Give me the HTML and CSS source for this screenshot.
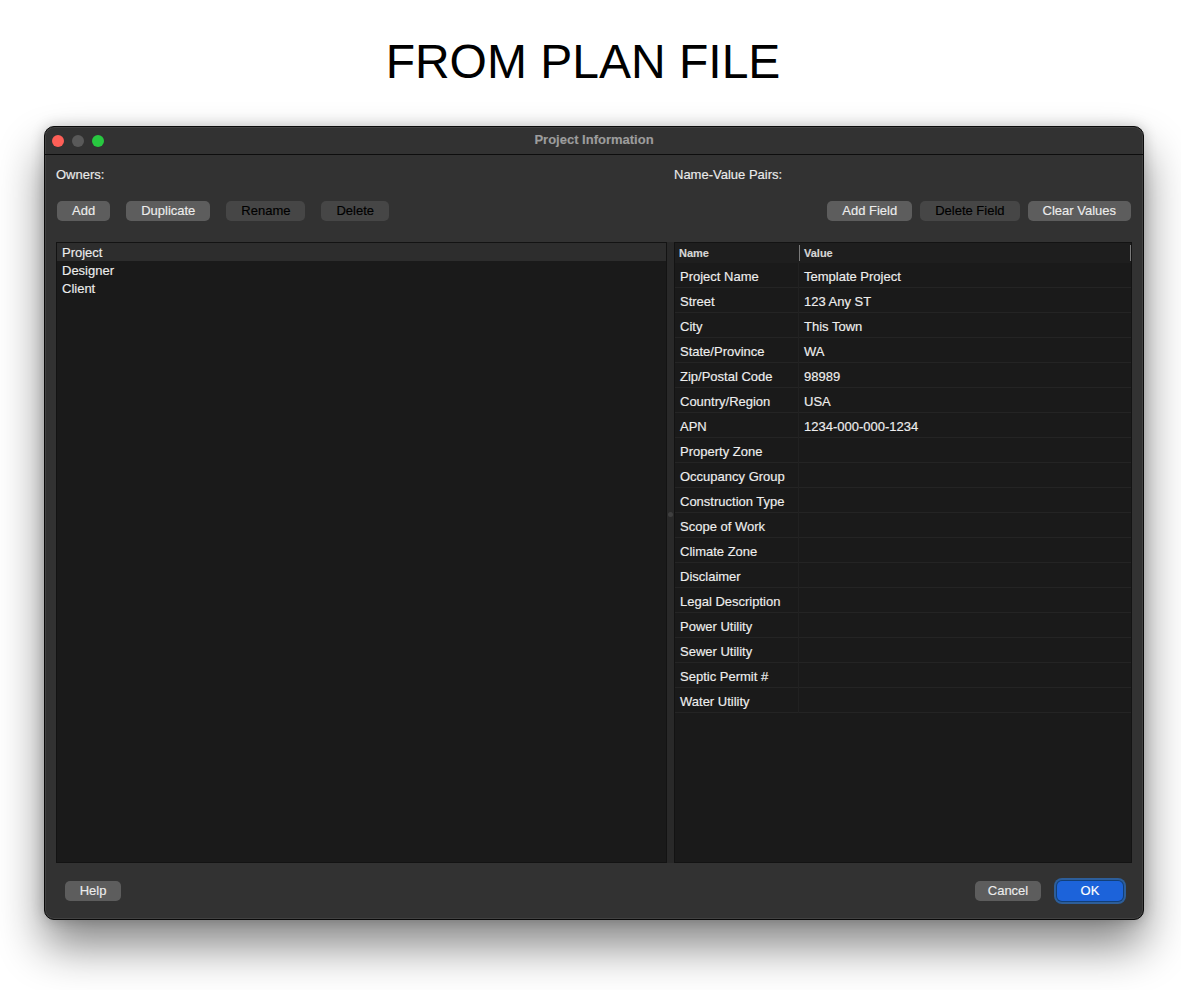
FILE: index.html
```html
<!DOCTYPE html>
<html lang="en">
<head>
<meta charset="utf-8">
<title>Project Information</title>
<link rel="stylesheet" href="styles.css">
</head>
<body>
<h1 class="page-title">FROM PLAN FILE</h1>

<div class="window">
  <div class="titlebar">
    <div class="lights">
      <span class="light close"></span>
      <span class="light min"></span>
      <span class="light zoom"></span>
    </div>
    <div class="title">Project Information</div>
    <div></div>
  </div>

  <div class="content">
    <div class="label owners-label">Owners:</div>
    <div class="label pairs-label">Name-Value Pairs:</div>

    <div class="toolbar left-tools">
      <button class="btn">Add</button>
      <button class="btn">Duplicate</button>
      <button class="btn disabled">Rename</button>
      <button class="btn disabled">Delete</button>
    </div>
    <div class="toolbar right-tools">
      <button class="btn">Add Field</button>
      <button class="btn disabled">Delete Field</button>
      <button class="btn">Clear Values</button>
    </div>

    <div class="list">
      <div class="list-row selected">Project</div>
      <div class="list-row">Designer</div>
      <div class="list-row">Client</div>
    </div>

    <div class="splitter"><span class="grip"></span></div>

    <div class="table">
      <div class="thead">
        <div class="th">Name</div>
        <div class="th value-th">Value</div>
      </div>
      <div class="tr"><div class="td name">Project Name</div><div class="td">Template Project</div></div>
      <div class="tr"><div class="td name">Street</div><div class="td">123 Any ST</div></div>
      <div class="tr"><div class="td name">City</div><div class="td">This Town</div></div>
      <div class="tr"><div class="td name">State/Province</div><div class="td">WA</div></div>
      <div class="tr"><div class="td name">Zip/Postal Code</div><div class="td">98989</div></div>
      <div class="tr"><div class="td name">Country/Region</div><div class="td">USA</div></div>
      <div class="tr"><div class="td name">APN</div><div class="td">1234-000-000-1234</div></div>
      <div class="tr"><div class="td name">Property Zone</div><div class="td"></div></div>
      <div class="tr"><div class="td name">Occupancy Group</div><div class="td"></div></div>
      <div class="tr"><div class="td name">Construction Type</div><div class="td"></div></div>
      <div class="tr"><div class="td name">Scope of Work</div><div class="td"></div></div>
      <div class="tr"><div class="td name">Climate Zone</div><div class="td"></div></div>
      <div class="tr"><div class="td name">Disclaimer</div><div class="td"></div></div>
      <div class="tr"><div class="td name">Legal Description</div><div class="td"></div></div>
      <div class="tr"><div class="td name">Power Utility</div><div class="td"></div></div>
      <div class="tr"><div class="td name">Sewer Utility</div><div class="td"></div></div>
      <div class="tr"><div class="td name">Septic Permit #</div><div class="td"></div></div>
      <div class="tr"><div class="td name">Water Utility</div><div class="td"></div></div>
    </div>
  </div>

  <div class="footer">
    <button class="btn help">Help</button>
    <div class="footer-right">
      <button class="btn wide">Cancel</button>
      <button class="btn wide primary">OK</button>
    </div>
  </div>
</div>
</body>
</html>
```

FILE: styles.css
```css
html, body {
  margin: 0;
  padding: 0;
  background: #ffffff;
  font-family: "Liberation Sans", Arial, sans-serif;
}

body {
  padding-bottom: 70px;
}

.page-title {
  margin: 38px 0 0;
  padding-right: 15px;
  height: 48px;
  line-height: 48px;
  font-size: 48px;
  font-weight: normal;
  text-align: center;
  color: #000;
}

/* dialog window */
.window {
  margin: 40px 0 0 44px;
  width: 1100px;
  height: 794px;
  box-sizing: border-box;
  border: 1px solid #0a0a0a;
  border-radius: 10px;
  background: #323232;
  box-shadow:
    inset 0 0 0 1px rgba(255, 255, 255, 0.08),
    0 26px 46px rgba(0, 0, 0, 0.48),
    0 0 14px rgba(0, 0, 0, 0.2);
  display: flex;
  flex-direction: column;
  font-size: 13px;
  color: #e6e6e6;
  -webkit-text-stroke: 0.15px currentColor;
}

.titlebar {
  height: 27px;
  border-bottom: 1px solid #0d0d0d;
  display: grid;
  grid-template-columns: 1fr auto 1fr;
  align-items: center;
  padding: 0 7px;
}

.lights {
  display: flex;
  gap: 8px;
}

.light {
  width: 12px;
  height: 12px;
  border-radius: 50%;
}

.light.close { background: #fe5f57; }
.light.min { background: #595959; }
.light.zoom { background: #28c840; }

.title {
  font-weight: bold;
  font-size: 13px;
  line-height: 15px;
  padding-bottom: 2px;
  color: #9d9d9d;
}

/* main area */
.content {
  flex: 1;
  min-height: 0;
  display: grid;
  grid-template-columns: 611px 7px 458px;
  grid-template-rows: auto auto 1fr;
  padding: 12px 11px 0;
}

.label {
  font-size: 13px;
  line-height: 16px;
  color: #ebebeb;
}

.owners-label { grid-column: 1; grid-row: 1; }
.pairs-label { grid-column: 3; grid-row: 1; }

.toolbar {
  margin-top: 18px;
  display: flex;
  grid-row: 2;
}

.left-tools {
  grid-column: 1;
  gap: 16px;
  padding-left: 1px;
}

.right-tools {
  grid-column: 3;
  gap: 8px;
  justify-content: flex-end;
  padding-right: 1px;
}

.btn {
  height: 20px;
  box-sizing: border-box;
  padding: 0 15px;
  border: none;
  border-radius: 5px;
  background: #5d5d5d;
  color: #ececec;
  font-family: inherit;
  font-size: 13px;
  line-height: 20px;
  white-space: nowrap;
  -webkit-text-stroke: 0.15px currentColor;
}

.btn.disabled {
  background: #464646;
  color: #000000;
}

/* owners list */
.list {
  grid-column: 1;
  grid-row: 3;
  margin-top: 21px;
  border: 1px solid #131313;
  background: #1a1a1a;
}

.list-row {
  height: 18px;
  box-sizing: border-box;
  padding: 2px 0 0 5px;
  line-height: 16px;
  color: #ececec;
}

.list-row.selected {
  background: #2d2d2d;
}

.splitter {
  grid-column: 2;
  grid-row: 3;
  margin-top: 21px;
  background: #292929;
  display: flex;
  justify-content: center;
  padding-top: 270px;
}

.grip {
  width: 5px;
  height: 5px;
  border-radius: 50%;
  background: #3f3f3f;
}

/* name-value table */
.table {
  grid-column: 3;
  grid-row: 3;
  margin-top: 21px;
  border: 1px solid #131313;
  background: #1a1a1a;
}

.thead {
  height: 20px;
  display: grid;
  grid-template-columns: 124px 1fr;
  align-items: center;
  background: #1e1e1e;
}

.th {
  height: 16px;
  line-height: 16px;
  font-size: 11px;
  font-weight: bold;
  color: #d6d6d6;
  padding-left: 4px;
}

.value-th {
  border-left: 1px solid #7a7a7a;
  border-right: 1px solid #7a7a7a;
}

.tr {
  height: 25px;
  display: grid;
  grid-template-columns: 124px 1fr;
  box-shadow: inset 0 -1px 0 #242424;
}

.td {
  height: 24px;
  padding: 1px 0 0 5px;
  line-height: 25px;
  color: #eeeeee;
  white-space: nowrap;
}

.td.name {
  border-right: 1px solid #212121;
}

/* footer buttons */
.footer {
  display: flex;
  justify-content: space-between;
  padding: 18px 20px;
}

.footer-right {
  display: flex;
  gap: 16px;
}

.btn.help {
  min-width: 56px;
  padding: 0 14px;
}

.btn.wide {
  min-width: 66px;
  padding: 0 12px;
}

.btn.primary {
  background: #1c63da;
  color: #ffffff;
  box-shadow: 0 0 0 1px #123f78, 0 0 0 3px rgba(44, 110, 190, 0.75);
}
```
